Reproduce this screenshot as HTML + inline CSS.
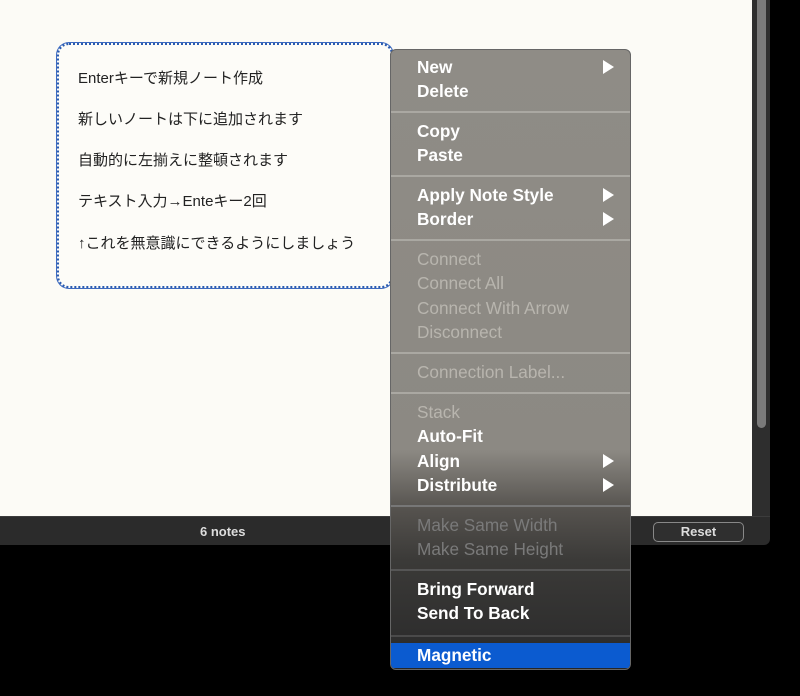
<!DOCTYPE html>
<html><head><meta charset="utf-8"><style>
*{margin:0;padding:0;box-sizing:border-box}
body{width:800px;height:696px;background:#000;position:relative;overflow:hidden;font-family:"Liberation Sans","Noto Sans CJK JP",sans-serif}
.canvas{position:absolute;left:0;top:0;width:752px;height:516px;background:#fcfbf6}
.track{position:absolute;left:752px;top:0;width:18px;height:516px;background:#2e2e2e}
.thumb{position:absolute;left:757px;top:0;width:9px;height:428px;background:#7a7a7a;border-radius:0 0 5px 5px}
.bar{position:absolute;left:0;top:516px;width:770px;height:29px;background:#2b2b2b;border-top:1px solid #3c3c3c;border-radius:0 0 6px 0}
.bar .n{position:absolute;left:200px;top:7px;color:#ddd;font-size:13px;font-weight:bold}
.reset{position:absolute;left:653px;top:5px;width:91px;height:20px;border:1px solid #888;border-radius:5px;background:#2f2f2f;color:#ddd;font-size:13px;font-weight:bold;text-align:center;line-height:18px}
.note{position:absolute;left:57px;top:43px;width:336px;height:245px;border:2.5px dotted #2a5bb0;border-radius:12px;background:#fdfcf8;box-shadow:0 0 0 1px #3d6ac0}
.note p{position:absolute;left:19px;font-size:15px;color:#222;white-space:nowrap}
.menu{position:absolute;left:390px;top:49px;width:241px;height:621px;border-radius:6px;border:1px solid #666;background:linear-gradient(#8f8c86 0px,#8c8983 400px,#55524e 460px,#3b3a38 510px,#2c2c2c 600px,#262626 621px);overflow:hidden}
.it{position:absolute;left:26px;font-size:17.2px;font-weight:bold;color:#fff;white-space:nowrap;line-height:20px}
.d{color:#b8b5ae;font-weight:normal}
.bot .d{color:#7a7a7a}
.sep{position:absolute;left:0;width:100%;height:2px;background:#aaa8a2}
.ar{position:absolute;left:212px;width:0;height:0;border-top:7px solid transparent;border-bottom:7px solid transparent;border-left:11px solid #fff}
.hl{position:absolute;left:0;top:593px;width:100%;height:25px;background:#0b5bd0}
</style></head><body>
<div class="canvas"></div>
<div class="track"></div><div class="thumb"></div>
<div class="bar"><span class="n">6 notes</span><div class="reset">Reset</div></div>
<div class="note">
<p style="top:22px">Enterキーで新規ノート作成</p>
<p style="top:63px">新しいノートは下に追加されます</p>
<p style="top:104px">自動的に左揃えに整頓されます</p>
<p style="top:145px">テキスト入力→Enteキー2回</p>
<p style="top:187px">↑これを無意識にできるようにしましょう</p>
</div>
<div class="menu">
<div class="it" style="top:7px">New</div><div class="ar" style="top:10px"></div>
<div class="it" style="top:31px">Delete</div>
<div class="sep" style="top:61px"></div>
<div class="it" style="top:71px">Copy</div>
<div class="it" style="top:95px">Paste</div>
<div class="sep" style="top:125px"></div>
<div class="it" style="top:135px">Apply Note Style</div><div class="ar" style="top:138px"></div>
<div class="it" style="top:159px">Border</div><div class="ar" style="top:162px"></div>
<div class="sep" style="top:189px"></div>
<div class="it d" style="top:199px">Connect</div>
<div class="it d" style="top:223px">Connect All</div>
<div class="it d" style="top:248px">Connect With Arrow</div>
<div class="it d" style="top:272px">Disconnect</div>
<div class="sep" style="top:302px"></div>
<div class="it d" style="top:312px">Connection Label...</div>
<div class="sep" style="top:342px"></div>
<div class="it d" style="top:352px">Stack</div>
<div class="it" style="top:376px">Auto-Fit</div>
<div class="it" style="top:401px">Align</div><div class="ar" style="top:404px"></div>
<div class="it" style="top:425px">Distribute</div><div class="ar" style="top:428px"></div>
<div class="sep" style="top:455px;background:#777"></div>
<div class="bot">
<div class="it d" style="top:465px">Make Same Width</div>
<div class="it d" style="top:489px">Make Same Height</div>
</div>
<div class="sep" style="top:519px;background:#555"></div>
<div class="it" style="top:529px">Bring Forward</div>
<div class="it" style="top:553px">Send To Back</div>
<div class="sep" style="top:585px;background:#4a4a4a"></div>
<div class="hl"></div>
<div class="it" style="top:595px">Magnetic</div>
</div>
</body></html>
